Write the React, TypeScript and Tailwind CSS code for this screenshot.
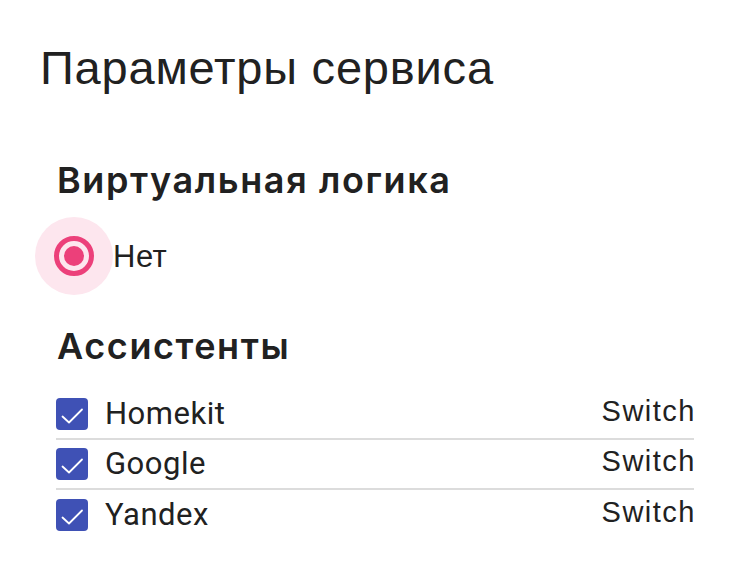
import React from 'react';

interface Assistant {
  name: string;
  type: string;
}

const assistants: Assistant[] = [
  { name: 'Homekit', type: 'Switch' },
  { name: 'Google', type: 'Switch' },
  { name: 'Yandex', type: 'Switch' },
];

const sans = "font-['Liberation_Sans',Arial,sans-serif]";
const heading = "font-['Inter',sans-serif] text-[36px] leading-[36px] font-semibold tracking-[1.6px]";

const CheckBox: React.FC = () => (
  <div className="w-[32px] h-[32px] rounded-[4px] bg-[#3f51b5] shrink-0">
    <svg width="32" height="32" viewBox="0 0 32 32" fill="none">
      <path d="M6.5 18.5l6.5 6L26 11.5" stroke="#fff" strokeWidth="1.8" strokeLinecap="round" strokeLinejoin="round" />
    </svg>
  </div>
);

const App: React.FC = () => {
  return (
    <div className={`w-[750px] h-[566px] bg-white text-[#212121] ${sans}`}>
      <h1 className="pl-[40px] pt-[44px] text-[47px] leading-[48px] font-normal tracking-[0.8px]">Параметры сервиса</h1>

      <div className="px-[56px]">
        {/* Virtual logic */}
        <h2 className={`mt-[70px] ${heading} pl-[1px]`}>Виртуальная логика</h2>
        <div className="flex items-center mt-[19px] -ml-[21px]">
          <div className="w-[78px] h-[78px] rounded-full bg-[#fde6ee] flex items-center justify-center shrink-0">
            <div className="w-[40px] h-[40px] rounded-full border-[5px] border-[#ec407a] flex items-center justify-center">
              <div className="w-[20px] h-[20px] rounded-full bg-[#ec407a]" />
            </div>
          </div>
          <span className="text-[31px] leading-none tracking-[0.5px]">Нет</span>
        </div>

        {/* Assistants */}
        <h2 className={`mt-[33px] ${heading} pl-[1px]`}>Ассистенты</h2>
        <div className="mt-[26px]">
          {assistants.map((a, i) => (
            <div
              key={a.name}
              className={`flex items-center h-[50px] ${i < assistants.length - 1 ? 'border-b-2 border-[#dcdcdc]' : ''}`}
            >
              <CheckBox />
              <span className="ml-[17px] text-[31px] tracking-[0.5px] font-['Roboto',sans-serif] flex-1">{a.name}</span>
              <span className="text-[29px] tracking-[1.5px] -mr-[2px] -mt-[4px]">{a.type}</span>
            </div>
          ))}
        </div>
      </div>
    </div>
  );
};

export default App;
